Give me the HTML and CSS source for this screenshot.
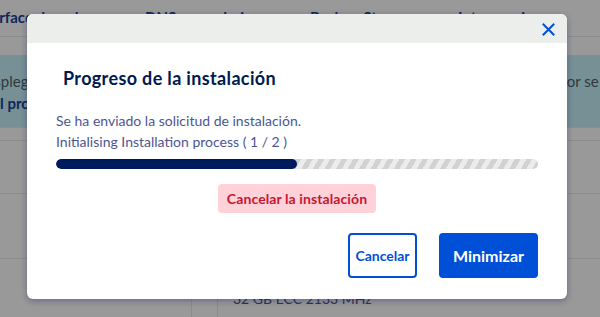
FILE: index.html
```html
<!DOCTYPE html>
<html lang="es">
<head>
<meta charset="utf-8">
<link rel="stylesheet" href="styles.css">
</head>
<body>
<div class="page">
  <nav class="nav">
    <span class="nav-item n1">Interface de red</span>
    <span class="nav-item n2">DNS secundario</span>
    <span class="nav-item n3">Backup Storage</span>
    <span class="nav-item n4">Intervenciones</span>
  </nav>
  <div class="gap"></div>
  <div class="banner">
    <div class="banner-row">
      <span class="b-left">desplegar</span>
      <span class="b-right">por se requiere</span>
    </div>
    <div class="banner-row"><span class="b-link">el proceso</span></div>
  </div>
  <div class="rows">
    <div class="row r1"></div>
    <div class="row r2"></div>
    <div class="row r3"></div>
    <div class="row r4"><span class="cell-a"></span><span class="cell-b"></span><span class="spec">32 GB ECC 2133 MHz</span></div>
  </div>
</div>
<div class="overlay"></div>
<div class="modal">
  <div class="modal-head">
    <button class="close" aria-label="Cerrar">
      <svg width="13" height="13" viewBox="0 0 13 13"><path d="M1.5 1.5 L11.5 11.5 M11.5 1.5 L1.5 11.5" stroke="#0050d7" stroke-width="2" stroke-linecap="square"/></svg>
    </button>
  </div>
  <div class="modal-body">
    <h2 class="title">Progreso de la instalación</h2>
    <p class="line">Se ha enviado la solicitud de instalación.</p>
    <p class="line">Initialising Installation process ( 1 / 2 )</p>
    <div class="progress"><div class="fill" style="width:50%"></div></div>
    <div class="cancel-wrap"><button class="cancel-install">Cancelar la instalación</button></div>
    <div class="footer">
      <button class="btn btn-outline">Cancelar</button>
      <button class="btn btn-primary">Minimizar</button>
    </div>
  </div>
</div>
</body>
</html>
```
FILE: styles.css
```css
* { box-sizing: border-box; }
html, body { margin: 0; padding: 0; }
body {
  width: 600px; height: 317px; overflow: hidden;
  font-family: "Lato", "Noto Sans", sans-serif;
  background: #ffffff;
  position: relative;
}
.page { display: flex; flex-direction: column; overflow: hidden; width: 600px; }
.nav {
  height: 37px; border-bottom: 1px solid #e4ecf4;
  font-size: 15px; font-weight: 700; color: #1b3f9a;
  position: relative; overflow: hidden;
}
.nav-item { position: absolute; top: 8px; white-space: nowrap; }
.n1 { left: -27px; }
.n2 { left: 145px; }
.n3 { left: 310px; }
.n4 { left: 458px; }
.gap { height: 18px; }
.banner {
  background: #c6f1f9; height: 72px; padding-top: 17px;
  display: flex; flex-direction: column; gap: 3px;
  font-size: 15px; overflow: hidden;
}
.banner-row { display: flex; justify-content: space-between; height: 19px; white-space: nowrap; }
.b-left { color: #4d5f6e; margin-left: -22px; }
.b-right { color: #4d5f6e; margin-right: -57px; }
.b-link { color: #1d3f96; font-weight: 700; margin-left: -8px; }
.rows { border-top: 1px solid #e8ecef; }
.row { border-bottom: 1px solid #eaeaea; }
.r1 { height: 13px; }
.r2 { height: 53px; }
.r3 { height: 65px; }
.r4 { height: 60px; display: flex; position: relative; }
.cell-a { width: 192px; border-right: 1px solid #eaeaea; }
.cell-b { width: 26px; border-right: 1px solid #eaeaea; }
.spec { position: absolute; left: 233px; top: 31px; font-size: 14px; color: #4d5693; }

.overlay {
  position: absolute; inset: 0; background: rgba(0,0,0,0.4);
}
.modal {
  position: absolute; left: 27px; top: 14px; width: 540px; height: 285px;
  background: #fff; border-radius: 6px; overflow: hidden;
  box-shadow: 0 2px 6px rgba(20,20,90,0.35);
  display: flex; flex-direction: column;
}
.modal-head {
  height: 29px; background: #eceeec;
  display: flex; justify-content: flex-end; align-items: center;
  padding-right: 12px;
}
.close {
  border: 0; background: transparent; padding: 0; width: 13px; height: 13px;
  display: flex; margin-top: 1px;
}
.modal-body { padding: 24px 29px 21px 29px; display: flex; flex-direction: column; flex: 1; }
.title {
  margin: 0 0 0 7px; font-size: 18px; font-weight: 700; color: #001a4f;
  line-height: 22px; letter-spacing: 0.35px;
}
.line {
  margin: 0; font-size: 14px; color: #4d5693; line-height: 21px;
}
.title + .line { margin-top: 21px; }
.progress {
  margin-top: 7px; height: 10px; border-radius: 5px; overflow: hidden;
  background: repeating-linear-gradient(-60deg, #d2d2d2 0 5px, #ececec 5px 10px);
}
.fill { height: 100%; background: #001a5e; border-radius: 5px; }
.cancel-wrap { display: flex; justify-content: center; margin-top: 15px; }
.cancel-install {
  border: 0; background: #ffd1d9; color: #c71630; border-radius: 4px;
  font-family: inherit; font-size: 14px; font-weight: 700;
  height: 29px; padding: 0 9px; letter-spacing: 0.1px;
}
.footer { display: flex; justify-content: flex-end; gap: 22px; margin-top: auto; }
.btn {
  height: 45px; border-radius: 4px; font-family: inherit; font-weight: 700;
  font-size: 15px;
}
.btn-outline {
  border: 2px solid #0050d7; background: #fff; color: #0050d7;
  width: 69px; padding: 0; font-size: 14px;
}
.btn-primary {
  border: 0; background: #0050d7; color: #fff; width: 99px; padding: 0; font-size: 16px;
}
```
